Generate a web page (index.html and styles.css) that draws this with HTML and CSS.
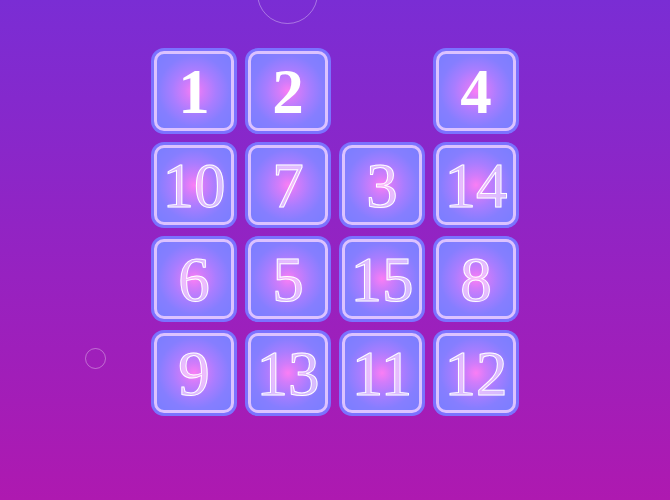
FILE: index.html
```html
<!DOCTYPE html>
<html>
<head>
<meta charset="utf-8">
<link rel="stylesheet" href="styles.css">
</head>
<body>
<div class="bubble bubble-top"></div>
<div class="bubble bubble-small"></div>
<main class="board">
  <div class="tile solid"><div class="face">1</div></div>
  <div class="tile solid"><div class="face">2</div></div>
  <div class="empty"></div>
  <div class="tile solid"><div class="face">4</div></div>
  <div class="tile"><div class="face">10</div></div>
  <div class="tile"><div class="face">7</div></div>
  <div class="tile"><div class="face">3</div></div>
  <div class="tile"><div class="face">14</div></div>
  <div class="tile"><div class="face">6</div></div>
  <div class="tile"><div class="face">5</div></div>
  <div class="tile"><div class="face">15</div></div>
  <div class="tile"><div class="face">8</div></div>
  <div class="tile"><div class="face">9</div></div>
  <div class="tile"><div class="face">13</div></div>
  <div class="tile"><div class="face">11</div></div>
  <div class="tile"><div class="face">12</div></div>
</main>
</body>
</html>
```
FILE: styles.css
```css
html, body {
  margin: 0;
  padding: 0;
}
body {
  width: 670px;
  height: 500px;
  overflow: hidden;
  position: relative;
  background: linear-gradient(180deg, #7a2dd4 0%, #ae19b0 100%);
  font-family: "Liberation Serif", "Times New Roman", serif;
}
.bubble {
  position: absolute;
  border-radius: 50%;
  border: 1.5px solid rgba(255, 255, 255, 0.35);
  box-sizing: border-box;
}
.bubble-top {
  width: 61px;
  height: 61px;
  left: 257px;
  top: -37px;
}
.bubble-small {
  width: 21px;
  height: 21px;
  left: 85px;
  top: 348px;
}
.board {
  display: grid;
  grid-template-columns: repeat(4, 86px);
  grid-auto-rows: 86px;
  gap: 8px;
  width: 368px;
  margin: 0 auto;
  padding-top: 48px;
}
.tile {
  background: #7b72ff;
  border-radius: 13px;
  padding: 3px;
  box-sizing: border-box;
}
.face {
  height: 100%;
  box-sizing: border-box;
  border: 3px solid #dcc2ff;
  border-radius: 10px;
  background: radial-gradient(circle at 50% 50%, #fa7ef5 0%, #d27cfa 18%, #a87dff 42%, #867eff 68%, #7a7eff 100%);
  display: flex;
  align-items: center;
  justify-content: center;
  font-size: 63px;
  line-height: 1;
  color: rgba(255, 200, 255, 0.1);
  -webkit-text-stroke: 1px #ffffff;
  text-shadow: 0 0 1.5px rgba(255, 230, 255, 0.6);
  padding-top: 2px;
}
.solid .face {
  color: #ffffff;
  -webkit-text-stroke: 0;
  font-weight: bold;
  text-shadow: none;
}
```
